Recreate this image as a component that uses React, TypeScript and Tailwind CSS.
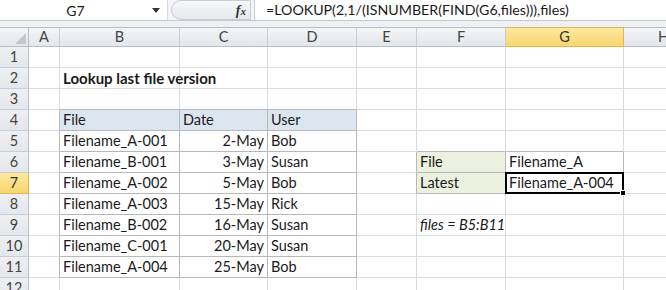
import React from "react"

const cols = ["A", "B", "C", "D", "E", "F", "G", "H"]
const rows = [1, 2, 3, 4, 5, 6, 7, 8, 9, 10, 11, 12]

const files: [string, string, string][] = [
  ["Filename_A-001", "2-May", "Bob"],
  ["Filename_B-001", "3-May", "Susan"],
  ["Filename_A-002", "5-May", "Bob"],
  ["Filename_A-003", "15-May", "Rick"],
  ["Filename_B-002", "16-May", "Susan"],
  ["Filename_C-001", "20-May", "Susan"],
  ["Filename_A-004", "25-May", "Bob"],
]

type Cell = { text?: string; right?: boolean; bold?: boolean; italic?: boolean; bg?: string }

function cellAt(col: string, row: number): Cell {
  if (col === "B" && row === 2) return { text: "Lookup last file version", bold: true }
  if (row === 4 && col === "B") return { text: "File", bg: "bg-[#dce6f1]" }
  if (row === 4 && col === "C") return { text: "Date", bg: "bg-[#dce6f1]" }
  if (row === 4 && col === "D") return { text: "User", bg: "bg-[#dce6f1]" }
  if (row >= 5 && row <= 11) {
    const f = files[row - 5]
    if (col === "B") return { text: f[0] }
    if (col === "C") return { text: f[1], right: true }
    if (col === "D") return { text: f[2] }
  }
  if (col === "F" && row === 6) return { text: "File", bg: "bg-[#ebf1de]" }
  if (col === "F" && row === 7) return { text: "Latest", bg: "bg-[#ebf1de]" }
  if (col === "G" && row === 6) return { text: "Filename_A" }
  if (col === "G" && row === 7) return { text: "Filename_A-004" }
  if (col === "F" && row === 9) return { text: "files = B5:B11", italic: true }
  return {}
}

// border classes: right and bottom edge of each cell
function edges(col: string, row: number) {
  const inTable = (c: string, r: number) => ["B", "C", "D"].includes(c) && r >= 4 && r <= 11
  const inLookup = (c: string, r: number) => ["F", "G"].includes(c) && r >= 6 && r <= 7
  const idx = cols.indexOf(col)
  const next = cols[idx + 1]
  const boxed = (c: string, r: number) => inTable(c, r) || inLookup(c, r)
  const r = boxed(col, row) || (next ? boxed(next, row) : false) ? "border-r-[#b8b8b8]" : "border-r-[#dadcdd]"
  const b = boxed(col, row) || boxed(col, row + 1) ? "border-b-[#b8b8b8]" : "border-b-[#dadcdd]"
  return `${r} ${b}`
}

export default function App() {
  return (
    <div className="w-[666px] h-[290px] overflow-hidden bg-white text-[#1a1a1a]" style={{ fontFamily: "Lato, 'Open Sans', sans-serif" }}>
      {/* formula bar */}
      <div className="flex h-[21px] border-b border-[#c6c9ce] bg-white">
        <div className="relative flex w-[167px] items-center justify-center text-[14px]">
          <span className="-ml-[16px]">G7</span>
          <svg className="absolute right-[7px] top-[8px]" width="8" height="5" viewBox="0 0 8 5">
            <path d="M0 0h8L4 5z" fill="#333" />
          </svg>
        </div>
        <div className="flex w-[87px] items-center border-l border-[#d6d9de] bg-[#f3f4f6]">
          <div className="ml-[3px] flex h-[20px] w-[80px] items-center justify-end rounded-l-full border border-[#c9ccd1] bg-[linear-gradient(#f7f8fa,#e6e8ec)] pr-[4px]">
            <span className="text-[14px] font-bold italic text-[#333]" style={{ fontFamily: "'Liberation Serif', serif" }}>
              f<span className="text-[11px]">x</span>
            </span>
          </div>
        </div>
        <div className="flex flex-1 items-center border-l border-[#c6c9ce] pl-[11px] text-[14.2px]">
          =LOOKUP(2,1/(ISNUMBER(FIND(G6,files))),files)
        </div>
      </div>
      <div className="h-[6px] bg-[#eef0f3]" />

      <div className="grid grid-cols-[29px_31px_120px_88px_89px_60px_89px_118px_80px]">
        {/* column headers */}
        <div className="relative h-[20px] border-t border-r border-b border-[#b9bec6] bg-[linear-gradient(#f4f5f7,#e3e6ea)]">
          <svg className="absolute bottom-[2px] right-[2px]" width="11" height="11" viewBox="0 0 11 11">
            <path d="M11 0V11H0z" fill="#c4c8ce" />
          </svg>
        </div>
        {cols.map((c) =>
          c === "G" ? (
            <div
              key={c}
              className="flex h-[20px] items-center justify-center border-t border-r border-b border-t-[#e2b64a] border-r-[#e2b64a] border-b-[#e2b64a] bg-[linear-gradient(#fce8a0,#f8d66e)] text-[14.5px] text-[#333]"
            >
              {c}
            </div>
          ) : (
            <div
              key={c}
              className="flex h-[20px] items-center justify-center border-t border-r border-b border-t-[#b9bec6] border-r-[#c9cdd3] border-b-[#b9bec6] bg-[linear-gradient(#f4f5f7,#e3e6ea)] text-[14.5px] text-[#444]"
            >
              {c}
            </div>
          )
        )}

        {rows.map((r) => (
          <React.Fragment key={r}>
            {r === 7 ? (
              <div className="flex h-[21px] items-center justify-center border-r border-b border-r-[#e2b64a] border-b-[#e2b64a] bg-[linear-gradient(#fce8a0,#f8d66e)] text-[14.5px] text-[#333]">
                {r}
              </div>
            ) : (
              <div className="flex h-[21px] items-center justify-center border-r border-b border-r-[#b9bec6] border-b-[#c9cdd3] bg-[linear-gradient(#eef0f3,#e4e7eb)] text-[14.5px] text-[#444]">
                {r}
              </div>
            )}
            {cols.map((c) => {
              const cell = cellAt(c, r)
              const selected = c === "G" && r === 7
              return (
                <div
                  key={c}
                  className={`relative flex h-[21px] items-end whitespace-nowrap border-r border-b pb-[1px] leading-[18px] ${edges(c, r)} ${cell.bg ?? ""} ${
                    cell.right ? "justify-end pr-[3px]" : "pl-[3px]"
                  } ${cell.bold ? "text-[15px] font-bold" : "text-[14.5px]"} ${cell.italic ? "italic" : ""}`}
                >
                  <span className="relative z-10">{cell.text}</span>
                  {selected && (
                    <>
                      <div className="absolute -left-[1px] -top-[1px] bottom-[-1px] right-[-1px] z-20 border-2 border-black" />
                      <div className="absolute -bottom-[3px] -right-[3px] z-30 h-[6px] w-[6px] border border-white bg-black" />
                    </>
                  )}
                </div>
              )
            })}
          </React.Fragment>
        ))}
      </div>
    </div>
  )
}
